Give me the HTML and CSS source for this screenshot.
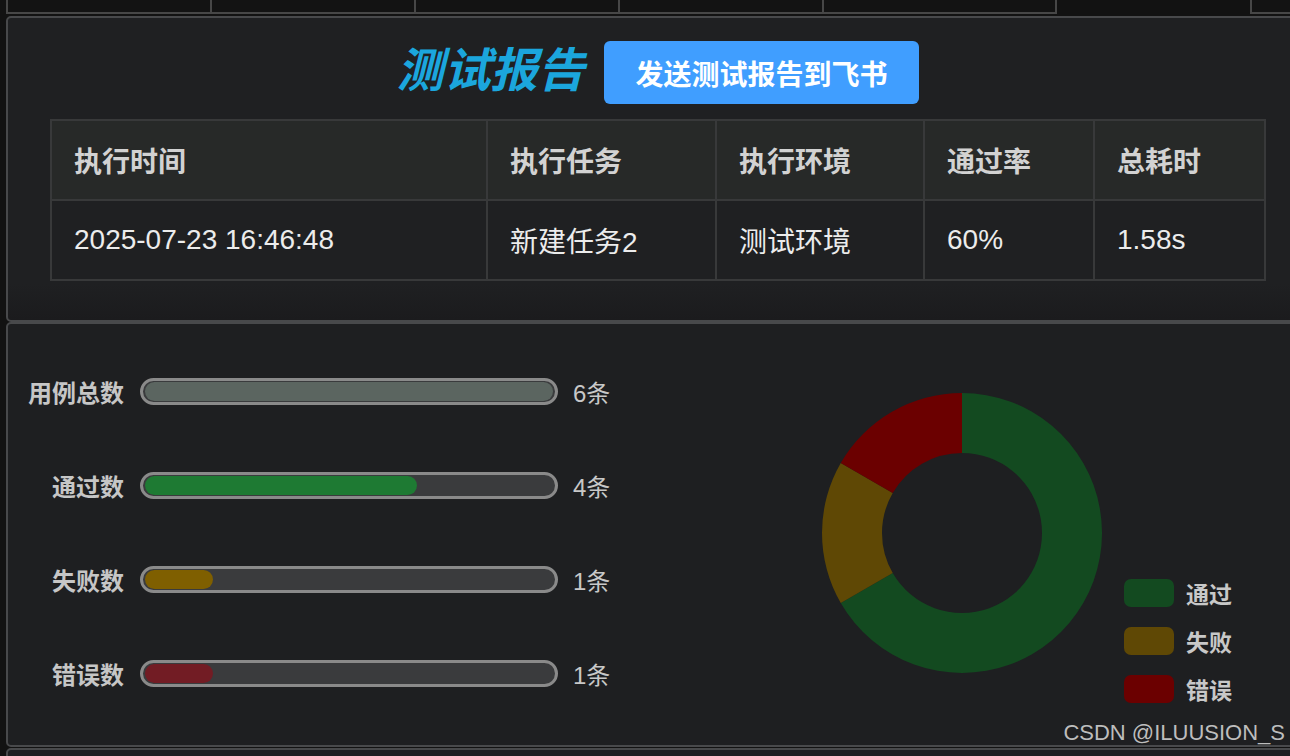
FILE: index.html
```html
<!DOCTYPE html>
<html lang="zh-CN">
  <head>
    <meta charset="UTF-8" />
    <meta name="viewport" content="width=device-width, initial-scale=1.0" />
    <title>测试报告</title>
    <link rel="stylesheet" href="styles.css">
  </head>
  <body>
    <div class="page">
      <div class="tabs">
        <div class="tab tab-first"></div>
        <div class="tab"></div>
        <div class="tab"></div>
        <div class="tab"></div>
        <div class="tab tab-wide"></div>
        <div class="tab-gap"></div>
        <div class="tab tab-last"></div>
      </div>

      <section class="card report">
        <div class="report-head">
          <h1 class="report-title">测试报告</h1>
          <button class="send-btn">发送测试报告到飞书</button>
        </div>
        <table class="summary">
          <colgroup>
            <col class="col-time" />
            <col class="col-task" />
            <col class="col-env" />
            <col class="col-rate" />
            <col class="col-cost" />
          </colgroup>
          <thead>
            <tr>
              <th>执行时间</th>
              <th>执行任务</th>
              <th>执行环境</th>
              <th>通过率</th>
              <th>总耗时</th>
            </tr>
          </thead>
          <tbody>
            <tr>
              <td>2025-07-23 16:46:48</td>
              <td>新建任务2</td>
              <td>测试环境</td>
              <td>60%</td>
              <td>1.58s</td>
            </tr>
          </tbody>
        </table>
      </section>

      <section class="card stats">
        <div class="bars">
          <div class="bar-row">
            <span class="bar-label">用例总数</span>
            <div class="bar"><div class="bar-fill fill-total" style="width: 100%"></div></div>
            <span class="bar-value">6条</span>
          </div>
          <div class="bar-row">
            <span class="bar-label">通过数</span>
            <div class="bar"><div class="bar-fill fill-pass" style="width: 66.67%"></div></div>
            <span class="bar-value">4条</span>
          </div>
          <div class="bar-row">
            <span class="bar-label">失败数</span>
            <div class="bar"><div class="bar-fill fill-fail" style="width: 16.67%"></div></div>
            <span class="bar-value">1条</span>
          </div>
          <div class="bar-row">
            <span class="bar-label">错误数</span>
            <div class="bar"><div class="bar-fill fill-error" style="width: 16.67%"></div></div>
            <span class="bar-value">1条</span>
          </div>
        </div>

        <div class="chart">
          <svg class="donut" width="280" height="280" viewBox="0 0 280 280">
            <!-- 通过 4/6 -->
            <path fill="#134a20" d="M140 0 A140 140 0 1 1 18.76 210 L70.72 180 A80 80 0 1 0 140 60 Z" />
            <!-- 失败 1/6 -->
            <path fill="#5f4805" d="M18.76 210 A140 140 0 0 1 18.76 70 L70.72 100 A80 80 0 0 0 70.72 180 Z" />
            <!-- 错误 1/6 -->
            <path fill="#6b0000" d="M18.76 70 A140 140 0 0 1 140 0 L140 60 A80 80 0 0 0 70.72 100 Z" />
          </svg>
          <ul class="legend">
            <li><span class="swatch swatch-pass"></span>通过</li>
            <li><span class="swatch swatch-fail"></span>失败</li>
            <li><span class="swatch swatch-error"></span>错误</li>
          </ul>
        </div>
      </section>

      <section class="card next"></section>
    </div>

    <div class="watermark">CSDN @ILUUSION_S</div>
  </body>
</html>
```

FILE: styles.css
```css
html,
body {
  margin: 0;
  height: 100%;
}
body {
  position: relative;
  overflow: hidden;
  background: #121212;
  font-family: "Liberation Sans", "Noto Sans CJK SC", sans-serif;
  color: #e8e8e8;
}
.page {
  width: 1310px;
  padding-left: 6px;
}

/* strip of cells above the report */
.tabs {
  display: flex;
  height: 14px;
}
.tab {
  box-sizing: border-box;
  width: 204px;
  border-right: 2px solid #474747;
  border-bottom: 2px solid #474747;
  background: #131313;
}
.tab-first {
  width: 206px;
  border-left: 2px solid #474747;
}
.tab-wide {
  width: 233px;
}
.tab-gap {
  width: 193px;
}
.tab-last {
  flex: 1;
  border-right: none;
  border-left: 2px solid #474747;
}

.card {
  box-sizing: border-box;
  width: 1304px;
  border: 2px solid #48494b;
  border-radius: 5px 0 0 5px;
  background: #1e1f21;
}

/* report card */
.report {
  margin-top: 2px;
  height: 306px;
  padding: 23px 43px 0 42px;
  background: linear-gradient(#1f2022 88%, #1b1b1d);
}
.report-head {
  display: flex;
  justify-content: center;
  align-items: center;
  height: 63px;
  margin-bottom: 15px;
}
.report-title {
  margin: -12px 0 0;
  font-family: "Noto Sans CJK SC", sans-serif;
  font-size: 47px;
  font-weight: 700;
  font-style: italic;
  line-height: 56px;
  color: #1ba6dd;
}
.send-btn {
  height: 63px;
  margin-left: 20px;
  padding: 0 31px;
  border: none;
  border-radius: 6px;
  background: #409eff;
  color: #ffffff;
  font-family: "Noto Sans CJK SC", sans-serif;
  font-size: 28px;
  font-weight: 700;
  cursor: pointer;
}

.summary {
  width: 1214px;
  border-collapse: collapse;
  table-layout: fixed;
  font-size: 28px;
}
.col-time {
  width: 436px;
}
.col-task {
  width: 229px;
}
.col-env {
  width: 208px;
}
.col-rate {
  width: 170px;
}
.col-cost {
  width: 171px;
}
.summary th,
.summary td {
  height: 78px;
  padding: 0 0 0 22px;
  border: 2px solid #38393a;
  text-align: left;
  white-space: nowrap;
}
.summary th {
  background: #272928;
  color: #d2d2d2;
  font-weight: 700;
}
.summary td {
  color: #ececec;
}

/* statistics card */
.stats {
  display: flex;
  align-items: center;
  height: 425px;
  padding: 0 0 4px 16px;
}
.bars {
  display: flex;
  flex-direction: column;
  gap: 64px;
  width: 598px;
}
.bar-row {
  display: flex;
  align-items: center;
  height: 30px;
}
.bar-label {
  width: 100px;
  text-align: right;
  font-family: "Noto Sans CJK SC", sans-serif;
  font-size: 24px;
  font-weight: 700;
  color: #c6c6c6;
}
.bar {
  box-sizing: border-box;
  width: 418px;
  height: 27px;
  margin: 0 15px 0 16px;
  padding: 1px 2px;
  border: 3px solid #8a8a8a;
  border-radius: 14px;
  background: #3a3b3d;
}
.bar-fill {
  height: 100%;
  border-radius: 10px;
}
.fill-total {
  background: #5b6560;
}
.fill-pass {
  background: #1e7a33;
}
.fill-fail {
  background: #7f5f00;
}
.fill-error {
  background: #721c24;
}
.bar-value {
  font-family: "Liberation Sans", "Noto Sans CJK SC", sans-serif;
  font-size: 24px;
  color: #c8c8c8;
}

.chart {
  display: flex;
  align-items: flex-end;
  margin-left: 200px;
}
.donut {
  display: block;
}
.legend {
  list-style: none;
  margin: 0 0 -30px 22px;
  padding: 0;
  display: flex;
  flex-direction: column;
  gap: 20px;
}
.legend li {
  display: flex;
  align-items: center;
  height: 28px;
  font-family: "Noto Sans CJK SC", sans-serif;
  font-size: 23px;
  font-weight: 700;
  color: #c8c8c8;
}
.swatch {
  width: 50px;
  height: 28px;
  margin-right: 12px;
  border-radius: 7px;
}
.swatch-pass {
  background: #134a20;
}
.swatch-fail {
  background: #5f4805;
}
.swatch-error {
  background: #6b0000;
}

.next {
  margin-top: 1px;
  height: 40px;
}

.watermark {
  position: absolute;
  top: 720px;
  right: 5px;
  font-size: 22px;
  line-height: 26px;
  color: #bdbdbd;
}
```
